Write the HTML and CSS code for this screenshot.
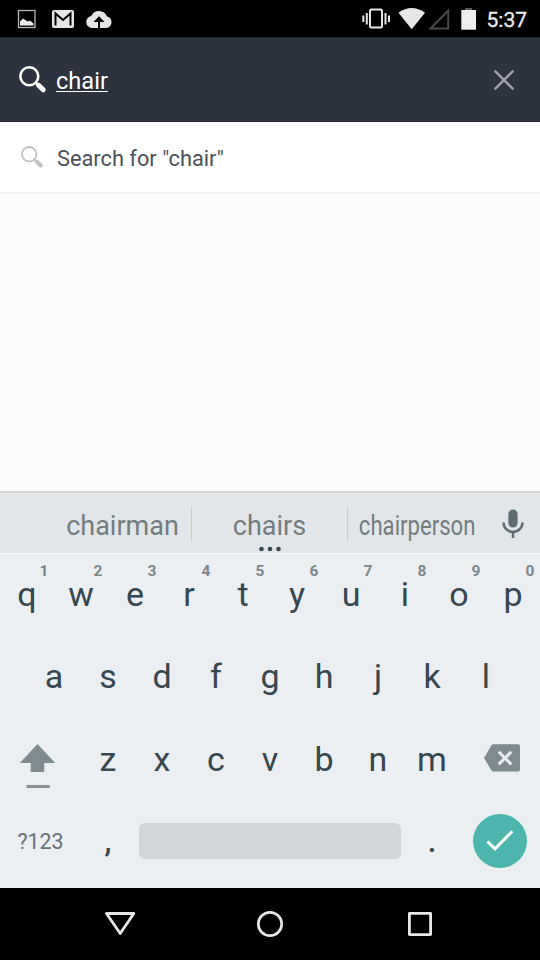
FILE: index.html
```html
<!DOCTYPE html>
<html lang="en">
<head>
<meta charset="utf-8">
<title>Search</title>
<link rel="stylesheet" href="styles.css">
</head>
<body>
<div class="phone">
  <div class="status">
    <svg width="120" height="37" viewBox="0 0 120 37">
      <rect x="18.5" y="10.5" width="16.500" height="17" fill="none" stroke="#b9b9b9" stroke-width="1.300"/>
      <path d="M20 25.500v-4l3-3 3 2 2 1 2-1 3.500 3v2z" fill="#eee"/>
      <rect x="52" y="10" width="22" height="18" rx="2" fill="#e6e6e6"/>
      <path d="M55.500 25.500V13.500L63 20l7.500-6.500v12" fill="none" stroke="#000" stroke-width="2"/>
      <path d="M92 28a6 6 0 0 1-.8-11.900A8.500 8.500 0 0 1 107 16.400a5.900 5.900 0 0 1-.8 11.600z" fill="#e6e6e6"/>
      <path d="M98 28v-6h-4.500l5.500-5.700 5.500 5.700H100v6z" fill="#000"/>
    </svg>
    <svg class="signals" width="120" height="37" viewBox="360 0 120 37">
      <rect x="370" y="9.500" width="12" height="18" rx="1.500" fill="none" stroke="#e6e6e6" stroke-width="2"/>
      <path d="M363.300 15.500v6.500M366.800 13v11.500M385.500 13v11.500M389 15.500v6.500" stroke="#e6e6e6" stroke-width="2"/>
      <path d="M398.500 12.700Q411.500 3.500 425 12.700L411.700 29.200z" fill="#e6e6e6"/>
      <path d="M430.500 28.500L448.200 10.500V28.500z" fill="none" stroke="#4a4a4a" stroke-width="1.900"/>
      <path d="M465 8h7v2h-7z" fill="#555"/><path d="M461.300 10h14.700v19.700h-14.700z" fill="#eee"/>
    </svg>
    <span class="clock">5:37</span>
  </div>

  <header class="search-bar">
    <svg width="28" height="28" viewBox="0 0 28 28"><circle cx="10.300" cy="10.300" r="9" fill="none" stroke="#fff" stroke-width="2.600"/><path d="M16.500 16.500l3 3" stroke="#fff" stroke-width="3"/><path d="M19.600 19.300L24.200 23.800" stroke="#fff" stroke-width="5" stroke-linecap="round"/></svg>
    <span class="query">chair</span>
    <svg class="clear" width="20" height="20" viewBox="0 0 20 20"><path d="M1.300 1.300l17.400 17.400M18.700 1.300L1.300 18.700" stroke="#a0a3aa" stroke-width="2.400" stroke-linecap="round"/></svg>
  </header>

  <div class="result">
    <svg width="23" height="23" viewBox="0 0 28 28"><circle cx="10" cy="10" r="8.800" fill="none" stroke="#bfc1c1" stroke-width="2.200"/><path d="M16.500 16.500l2.500 2.500" stroke="#bfc1c1" stroke-width="2.500"/><path d="M19.600 19.600L24 23.600" stroke="#bfc1c1" stroke-width="5" stroke-linecap="round"/></svg>
    <span>Search for "chair"</span>
  </div>
  <main class="empty"></main>

  <div class="suggestions">
    <span class="word first">chairman</span>
    <span class="word middle">chairs
      <svg class="dots" width="24" height="6" viewBox="0 0 24 6" fill="#37474f"><circle cx="3.500" cy="3" r="2.300"/><circle cx="12" cy="3" r="2.300"/><circle cx="20.500" cy="3" r="2.300"/></svg>
    </span>
    <span class="word last"><span class="narrow">chairperson</span></span>
    <svg class="mic" width="22" height="30" viewBox="0 0 22 30"><rect x="6.400" y=".5" width="9.200" height="18" rx="4.600" fill="#5f6d72"/><path d="M1.500 13.500a9.500 9.500 0 0 0 19 0M11 23v6" fill="none" stroke="#5f6d72" stroke-width="2.500"/></svg>
  </div>

  <div class="keyboard">
    <div class="row top">
      <span class="key">q<b>1</b></span><span class="key">w<b>2</b></span><span class="key">e<b>3</b></span><span class="key">r<b>4</b></span><span class="key">t<b>5</b></span><span class="key">y<b>6</b></span><span class="key">u<b>7</b></span><span class="key">i<b>8</b></span><span class="key">o<b>9</b></span><span class="key">p<b>0</b></span>
    </div>
    <div class="row">
      <span class="key">a</span><span class="key">s</span><span class="key">d</span><span class="key">f</span><span class="key">g</span><span class="key">h</span><span class="key">j</span><span class="key">k</span><span class="key">l</span>
    </div>
    <div class="row third">
      <span class="wide"><svg width="81" height="82" viewBox="0 718 81 82"><path d="M37.500 744L55.200 763H44.200v9H30.700v-9H19.800z" fill="#7f8b8f"/><path d="M26.500 785h23.300v3H26.500z" fill="#8b9397"/></svg></span>
      <span class="key">z</span><span class="key">x</span><span class="key">c</span><span class="key">v</span><span class="key">b</span><span class="key">n</span><span class="key">m</span>
      <span class="wide"><svg width="81" height="82" viewBox="459 718 81 82"><path d="M493 744.200H518a2 2 0 0 1 2 2V769.500a2 2 0 0 1-2 2H493L491.500 770.500 484 758 491.500 745.200z" fill="#7f8b8f"/><path d="M498.700 751.800l12.600 12.600M511.300 751.800l-12.600 12.600" stroke="#ebeff2" stroke-width="2.900"/></svg></span>
    </div>
    <div class="row bottom">
      <span class="wide symbols">?123</span>
      <span class="key punct">,</span>
      <span class="space"></span>
      <span class="key punct">.</span>
      <span class="wide enter"><svg width="54" height="54" viewBox="0 0 54 54"><circle cx="27" cy="27" r="27" fill="#4db6ac"/><path d="M14.500 27.500L22 34.800 39.300 17.300" fill="none" stroke="#fff" stroke-width="3"/></svg></span>
    </div>
  </div>

  <nav class="nav">
    <svg width="540" height="72" viewBox="0 888 540 72" fill="none" stroke="#e6e6e6" stroke-linejoin="round">
      <path d="M106.500 913.500h27.300L120.200 933.500z" stroke-width="2.800"/>
      <circle cx="270" cy="924" r="11.700" stroke-width="2.700"/>
      <rect x="409.400" y="913.400" width="21.200" height="21.200" stroke-width="2.800"/>
    </svg>
  </nav>
</div>
</body>
</html>
```
FILE: styles.css
```css
* { box-sizing: border-box; }
body { margin: 0; font-family: Roboto, "Liberation Sans", sans-serif; }
svg { display: block; flex: none; }
.phone { width: 540px; height: 960px; display: flex; flex-direction: column; overflow: hidden; background: #fcfcfc; }

.status { height: 37px; flex: none; display: flex; background: #000; color: #ececec; }
.signals { margin-left: 240px; }
.clock { margin-left: 6.500px; font-size: 21px; line-height: 40px; -webkit-text-stroke: .3px #ececec; }

.search-bar { height: 85px; flex: none; display: flex; align-items: center; padding: 0 26px 0 19px; background: #2d333e; border-top: 1px solid #20252d; border-bottom: 1px solid #22262f; color: #fff; }
.query { margin-left: 9px; font-size: 23.600px; line-height: 28px; padding-top: 2px; text-decoration: underline; text-decoration-thickness: 1px; text-underline-offset: 2px; }
.clear { margin-left: auto; }

.result { height: 72px; flex: none; display: flex; align-items: center; padding-left: 21px; background: #fff; border-bottom: 2px solid #f1f1f1; color: #4c5158; font-size: 21.800px; }
.result span { margin-left: 13px; padding-top: 3px; }
.empty { flex: 1; }

.suggestions { height: 63px; flex: none; display: flex; align-items: center; background: #e2e6e8; border-top: 2px solid #d2d4d5; border-bottom: 1px solid #f8fafb; box-shadow: inset 0 1px #eceff0; padding-top: 2px; color: #737d80; font-size: 27px; }
.word { position: relative; height: 36px; line-height: 40px; text-align: center; white-space: nowrap; }
.first { width: 192px; padding-left: 54px; border-right: 1px solid #c8ccce; }
.middle { width: 156px; border-right: 1px solid #c8ccce; }
.last { width: 138px; display: flex; justify-content: center; }
.narrow { transform: scaleX(.82); }
.dots { position: absolute; left: 65.500px; top: 40px; }
.mic { margin-left: 16px; }

.keyboard { height: 334px; flex: none; background: #ebeff2; color: #37474f; }
.row { height: 82px; display: flex; justify-content: center; }
.key { position: relative; width: 54px; font-size: 34px; line-height: 80px; text-align: center; }
.third .key { line-height: 82px; }
.key b { position: absolute; right: 5.500px; top: 7px; font-size: 15.500px; line-height: 20px; color: #7b868a; }
.wide { width: 81px; }
.row .symbols { font-size: 21.400px; line-height: 84px; text-align: center; color: #667276; }
.row .punct { font-size: 31px; line-height: 84px; font-weight: 500; }
.space { width: 262px; height: 36px; margin: 23px 4px 0; border-radius: 6px; background: #d0d5d8; }
.enter { display: flex; align-items: center; padding-left: 13.500px; }

.nav { height: 72px; flex: none; background: #000; }
```
